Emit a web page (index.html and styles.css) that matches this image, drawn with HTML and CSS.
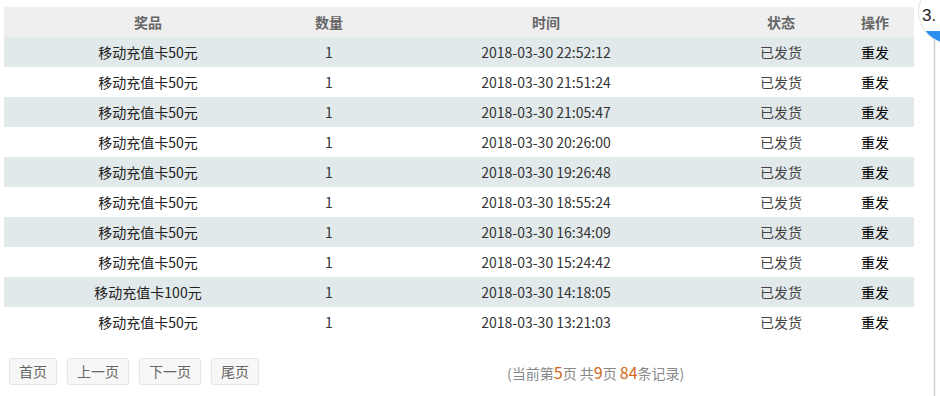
FILE: index.html
```html
<!DOCTYPE html>
<html lang="zh-CN">
<head>
<meta charset="utf-8">
<link rel="stylesheet" href="styles.css">
</head>
<body>
<div class="page">
  <table class="records">
    <colgroup>
      <col class="c1"><col class="c2"><col class="c3"><col class="c4"><col class="c5">
    </colgroup>
    <thead>
      <tr><th>奖品</th><th>数量</th><th>时间</th><th>状态</th><th>操作</th></tr>
    </thead>
    <tbody>
      <tr><td class="prize">移动充值卡50元</td><td>1</td><td>2018-03-30 22:52:12</td><td class="status">已发货</td><td class="op">重发</td></tr>
      <tr><td class="prize">移动充值卡50元</td><td>1</td><td>2018-03-30 21:51:24</td><td class="status">已发货</td><td class="op">重发</td></tr>
      <tr><td class="prize">移动充值卡50元</td><td>1</td><td>2018-03-30 21:05:47</td><td class="status">已发货</td><td class="op">重发</td></tr>
      <tr><td class="prize">移动充值卡50元</td><td>1</td><td>2018-03-30 20:26:00</td><td class="status">已发货</td><td class="op">重发</td></tr>
      <tr><td class="prize">移动充值卡50元</td><td>1</td><td>2018-03-30 19:26:48</td><td class="status">已发货</td><td class="op">重发</td></tr>
      <tr><td class="prize">移动充值卡50元</td><td>1</td><td>2018-03-30 18:55:24</td><td class="status">已发货</td><td class="op">重发</td></tr>
      <tr><td class="prize">移动充值卡50元</td><td>1</td><td>2018-03-30 16:34:09</td><td class="status">已发货</td><td class="op">重发</td></tr>
      <tr><td class="prize">移动充值卡50元</td><td>1</td><td>2018-03-30 15:24:42</td><td class="status">已发货</td><td class="op">重发</td></tr>
      <tr><td class="prize">移动充值卡100元</td><td>1</td><td>2018-03-30 14:18:05</td><td class="status">已发货</td><td class="op">重发</td></tr>
      <tr><td class="prize">移动充值卡50元</td><td>1</td><td>2018-03-30 13:21:03</td><td class="status">已发货</td><td class="op">重发</td></tr>
    </tbody>
  </table>
  <div class="pager">
    <a class="btn">首页</a>
    <a class="btn">上一页</a>
    <a class="btn">下一页</a>
    <a class="btn">尾页</a>
    <span class="info">(当前第<em>5</em>页 共<em>9</em>页 <em>84</em>条记录)</span>
  </div>
</div>
<div class="side-widget">
  <svg width="40" height="396" viewBox="0 0 40 396">
    <defs>
      <clipPath id="circ"><circle cx="50" cy="12" r="31"/></clipPath>
    </defs>
    <line x1="34.5" y1="38" x2="34.5" y2="396" stroke="#cfcfcf" stroke-width="1.5"/>
    <circle cx="50" cy="12" r="32" fill="#e4e4e4"/>
    <circle cx="50" cy="12" r="31" fill="#ffffff"/>
    <rect x="0" y="31" width="40" height="20" fill="#2b8ff0" clip-path="url(#circ)"/>
    <text x="22" y="21" class="num">3.</text>
  </svg>
</div>
</body>
</html>
```
FILE: styles.css
```css
html, body {
  margin: 0;
  padding: 0;
  background: #ffffff;
}
body {
  font-family: "Noto Sans CJK SC", "Liberation Sans", sans-serif;
  font-size: 14px;
  color: #333;
}
.page {
  padding: 7px 0 0 4px;
  width: 910px;
}
.records {
  width: 910px;
  border-collapse: collapse;
  table-layout: fixed;
}
.c1 { width: 288px; }
.c2 { width: 74px; }
.c3 { width: 360px; }
.c4 { width: 110px; }
.c5 { width: 78px; }
.records th {
  height: 30px;
  padding: 0;
  background: #efefef;
  color: #666;
  font-weight: bold;
  text-align: center;
  line-height: 30px;
}
.records td {
  height: 30px;
  padding: 0;
  text-align: center;
  line-height: 30px;
  color: #333;
}
.records tbody tr:nth-child(odd) td {
  background: #e2e9ea;
}
.records td.prize { color: #222; }
.records td.status { color: #444; }
.records td.op { color: #000; }
.pager {
  display: flex;
  align-items: center;
  margin-top: 21px;
  padding-left: 5px;
  gap: 10px;
}
.btn {
  display: inline-block;
  height: 25px;
  line-height: 25px;
  padding: 0 9px;
  border: 1px solid #e6e6e6;
  border-radius: 2px;
  background: #f7f7f7;
  color: #666;
  font-size: 14px;
}
.info {
  margin-left: 238px;
  color: #888;
  font-size: 14px;
}
.info em {
  font-style: normal;
  color: #d2691e;
  font-size: 16px;
}
.side-widget {
  position: absolute;
  left: 900px;
  top: 0;
  width: 40px;
  height: 396px;
}
.side-widget svg { display: block; }
.num {
  font-family: "Liberation Sans", sans-serif;
  font-size: 17px;
  fill: #222;
}
```
